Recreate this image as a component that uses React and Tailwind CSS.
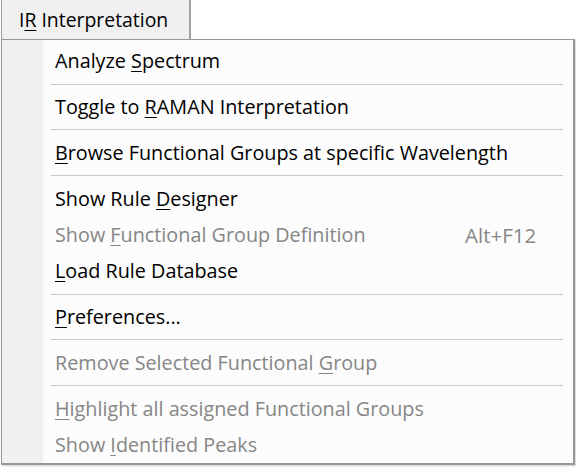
const items = [
  { pre: 'Analyze ', key: 'S', post: 'pectrum' },
  'sep',
  { pre: 'Toggle to ', key: 'R', post: 'AMAN Interpretation' },
  'sep',
  { pre: '', key: 'B', post: 'rowse Functional Groups at specific Wavelength' },
  'sep',
  { pre: 'Show Rule ', key: 'D', post: 'esigner' },
  { pre: 'Show ', key: 'F', post: 'unctional Group Definition', disabled: true, shortcut: 'Alt+F12' },
  { pre: '', key: 'L', post: 'oad Rule Database' },
  'sep',
  { pre: '', key: 'P', post: 'references...' },
  'sep',
  { pre: 'Remove Selected Functional ', key: 'G', post: 'roup', disabled: true },
  'sep',
  { pre: '', key: 'H', post: 'ighlight all assigned Functional Groups', disabled: true },
  { pre: 'Show ', key: 'I', post: 'dentified Peaks', disabled: true },
];

function MenuItem({ item }) {
  return (
    <div
      className={
        item.disabled
          ? 'flex items-center h-[36.3px] pl-[53px] pr-[36px] text-[#868686]'
          : 'flex items-center h-[36.3px] pl-[53px] pr-[36px] text-black'
      }
    >
      <span className="flex-1 whitespace-nowrap">
        {item.pre}
        <span className="underline underline-offset-[3px] decoration-1">{item.key}</span>
        {item.post}
      </span>
      {item.shortcut && <span className="w-[72px] whitespace-nowrap text-[20.5px]">{item.shortcut}</span>}
    </div>
  );
}

export default function App() {
  return (
    <div
      className="w-[576px] h-[468px] bg-white overflow-hidden text-[19.8px] leading-none"
      style={{ fontFamily: '"Open Sans", "Noto Sans", sans-serif' }}
    >
      <div className="flex">
        <div className="ml-[1px] w-[190px] h-[39px] bg-[#f0f0f0] border-l border-r-2 border-[#a0a0a0] flex items-center pl-[17px] pt-[1px] text-[19.4px]">
          <span>
            I<span className="underline underline-offset-[3px] decoration-1">R</span> Interpretation
          </span>
        </div>
      </div>
      <div className="ml-[1px] w-[574px] h-[426px] bg-[#fcfcfc] border border-r-2 border-b-2 border-[#979797] shadow-[1px_1px_2px_rgba(0,0,0,0.2)] flex">
        <div className="w-[41px] bg-[#f0f0f0] shrink-0" />
        <div className="flex-1 flex flex-col pt-[3px] -ml-[41px]">
          {items.map((item, i) =>
            item === 'sep' ? (
              <div key={i} className="h-[9.5px] flex items-center pl-[49px] pr-[10px]">
                <div className="h-px w-full bg-[#c8c8c8]" />
              </div>
            ) : (
              <MenuItem key={i} item={item} />
            )
          )}
        </div>
      </div>
    </div>
  );
}
